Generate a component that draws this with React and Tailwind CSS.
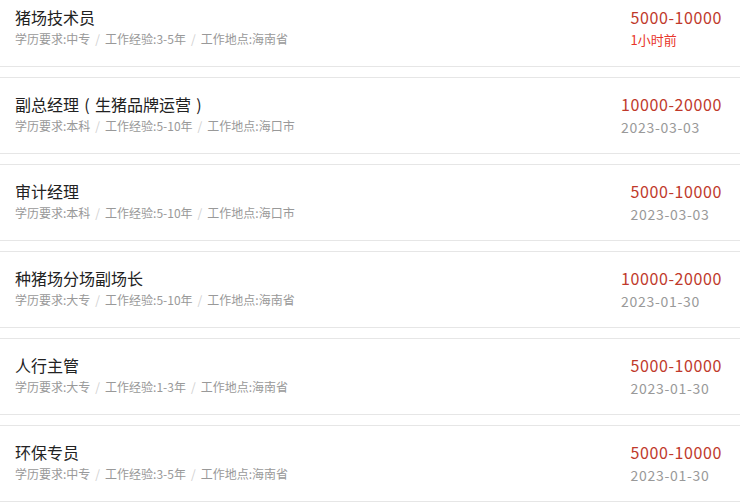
const jobs = [
  { title: "猪场技术员", edu: "中专", exp: "3-5年", loc: "海南省", salary: "5000-10000", time: "1小时前", recent: true },
  { title: ["副总经理", "(", "生猪品牌运营", ")"], edu: "本科", exp: "5-10年", loc: "海口市", salary: "10000-20000", time: "2023-03-03" },
  { title: "审计经理", edu: "本科", exp: "5-10年", loc: "海口市", salary: "5000-10000", time: "2023-03-03" },
  { title: "种猪场分场副场长", edu: "大专", exp: "5-10年", loc: "海南省", salary: "10000-20000", time: "2023-01-30" },
  { title: "人行主管", edu: "大专", exp: "1-3年", loc: "海南省", salary: "5000-10000", time: "2023-01-30" },
  { title: "环保专员", edu: "中专", exp: "3-5年", loc: "海南省", salary: "5000-10000", time: "2023-01-30" },
];

function Sep() {
  return <span className="px-[5px] text-[#d0d0d0]">/</span>;
}

function Title({ t }) {
  if (typeof t === "string") return t;
  return (
    <>
      {t[0]}
      <span className="inline-block w-[16px] text-center">{t[1]}</span>
      {t[2]}
      <span className="inline-block w-[16px] text-center">{t[3]}</span>
    </>
  );
}

export default function App() {
  return (
    <div
      className="w-[740px] h-[504px] overflow-hidden bg-white"
      style={{ fontFamily: '"Noto Sans CJK SC", "Noto Sans", sans-serif' }}
    >
      {jobs.map((j, i) => (
        <div
          key={i}
          className={
            "flex justify-between items-start border-b border-[#e6e6e6] mb-[10px] pl-[15px] pr-[18px] pb-[18px] " +
            (i === 0 ? "pt-[5px]" : "border-t pt-[14px]")
          }
        >
          <div>
            <div className="text-[16px] leading-[24px] text-[#222]">
              <Title t={j.title} />
            </div>
            <div className="mt-[1px] text-[12px] leading-[18px] text-[#999]">
              学历要求:{j.edu}
              <Sep />
              工作经验:{j.exp}
              <Sep />
              工作地点:{j.loc}
            </div>
          </div>
          <div className="text-left">
            <div className="text-[16px] leading-[24px] tracking-[0.6px] text-[#c0392b]">{j.salary}</div>
            {j.recent ? (
              <div className="mt-[3px] text-[13px] leading-[16px] text-[#e8352a]">{j.time}</div>
            ) : (
              <div className="mt-[3px] text-[14px] leading-[16px] tracking-[0.7px] text-[#999]">{j.time}</div>
            )}
          </div>
        </div>
      ))}
    </div>
  );
}
